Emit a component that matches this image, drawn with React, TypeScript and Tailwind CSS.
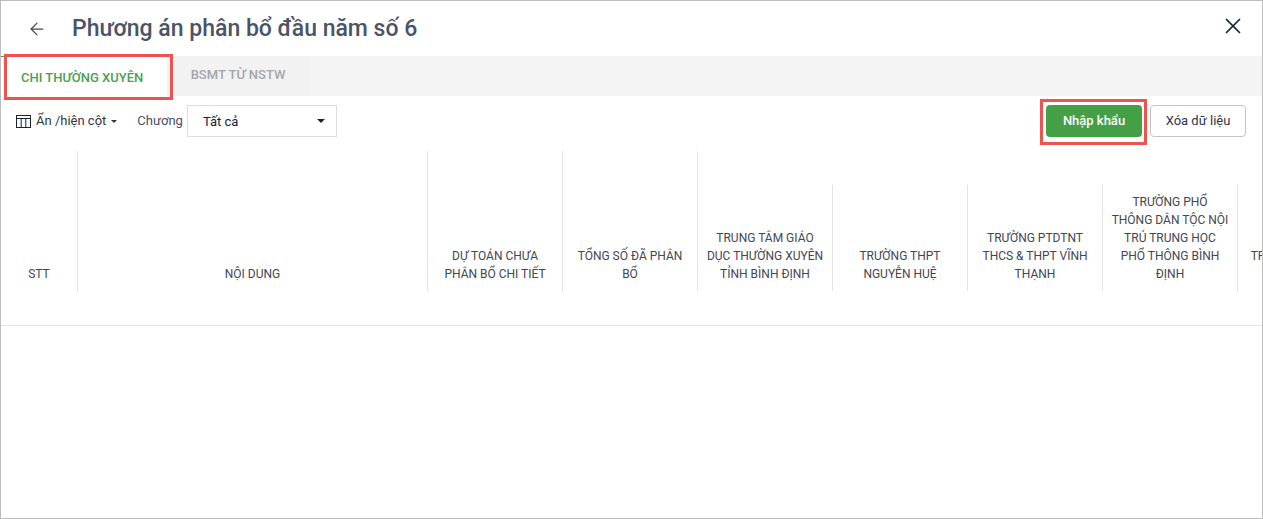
import React from 'react';
import { ArrowLeft, X } from 'lucide-react';

const fixedColumns = [
    { label: 'STT', width: 'w-[77px]' },
    { label: 'NỘI DUNG', width: 'w-[350px]' },
    { label: 'DỰ TOÁN CHƯA PHÂN BỔ CHI TIẾT', width: 'w-[135px]' },
    { label: 'TỔNG SỐ ĐÃ PHÂN BỔ', width: 'w-[135px]' },
];

const schoolColumns = [
    'TRUNG TÂM GIÁO DỤC THƯỜNG XUYÊN TỈNH BÌNH ĐỊNH',
    'TRƯỜNG THPT NGUYỄN HUỆ',
    'TRƯỜNG PTDTNT THCS & THPT VĨNH THẠNH',
    'TRƯỜNG PHỔ THÔNG DÂN TỘC NỘI TRÚ TRUNG HỌC PHỔ THÔNG BÌNH ĐỊNH',
    'TRƯỜNG THPT TAM QUAN',
];

const HeaderCell: React.FC<{ label: string; className: string }> = ({ label, className }) => (
    <div className={`flex shrink-0 items-end justify-center border-r border-[#e2e4e8] px-[8px] pb-[8px] text-center text-[12px] leading-[18px] text-[#3f4654] ${className}`}>
        <span>{label}</span>
    </div>
);

export default function App() {
    return (
        <div className="relative h-[519px] w-[1263px] overflow-hidden border border-[#bdbdbd] bg-white font-['Roboto',sans-serif]">
            {/* Title */}
            <div className="flex h-[55px] items-center pl-[26px] pr-[16px]">
                <ArrowLeft className="h-[20px] w-[20px] text-[#3f4654]" strokeWidth={1.5} />
                <h1 className="ml-[25px] mt-[1px] text-[23px] font-medium text-[#4a5468]">Phương án phân bổ đầu năm số 6</h1>
                <X className="mb-[5px] ml-auto h-[26px] w-[26px] text-[#1a2238]" strokeWidth={1.6} />
            </div>

            {/* Tabs */}
            <div className="flex h-[40px] bg-[#f4f4f4] text-[13px] font-medium">
                <div className="flex w-[166px] items-center border-t border-[#43a047] bg-white pl-[20px] pt-[2px] text-[#4c9f50]">CHI THƯỜNG XUYÊN</div>
                <div className="flex w-[142px] items-center justify-center bg-[#f2f2f2] pb-[2px] text-[#a3a6ad]">BSMT TỪ NSTW</div>
            </div>

            {/* Toolbar */}
            <div className="flex h-[55px] items-start pl-[15px] pr-[16px] pt-[9px] text-[13px]">
                <div className="flex h-[32px] items-center text-[#2e3547]">
                    <svg className="h-[15px] w-[15px]" viewBox="0 0 15 15" fill="none" stroke="#1a2238" strokeWidth="1">
                        <rect x="0.5" y="1.5" width="14" height="12" />
                        <path d="M0.5 4.5H14.5M5.2 4.5V13.5M9.8 4.5V13.5" />
                    </svg>
                    <span className="ml-[5px]">Ẩn /hiện cột</span>
                    <span className="ml-[5px] h-0 w-0 border-x-[3px] border-t-[3px] border-x-transparent border-t-[#2e3547]" />
                </div>
                <div className="ml-[20px] flex h-[32px] items-center text-[#4a4f68]">Chương</div>
                <div className="ml-[4px] flex h-[32px] w-[150px] items-center justify-between border border-[#dcdcdc] pl-[15px] pr-[11px] text-[#1a2238]">
                    <span className="pt-[1px]">Tất cả</span>
                    <span className="h-0 w-0 border-x-[4px] border-t-[4px] border-x-transparent border-t-[#1a2238]" />
                </div>
                <button className="ml-auto h-[32px] w-[96px] rounded-[4px] bg-[#43a047] text-[13px] font-medium text-white">Nhập khẩu</button>
                <button className="ml-[8px] h-[32px] w-[96px] rounded-[4px] border border-[#c4c4c4] bg-white text-[13px] text-[#2e3547]">Xóa dữ liệu</button>
            </div>

            {/* Table header */}
            <div className="flex h-[175px] items-start overflow-hidden border-b border-[#e2e4e8]">
                {fixedColumns.map((col) => (
                    <HeaderCell key={col.label} label={col.label} className={`h-[140px] ${col.width}`} />
                ))}
                <div className="flex shrink-0 flex-col">
                    <div className="h-[34px]" />
                    <div className="flex">
                        {schoolColumns.map((label) => (
                            <HeaderCell key={label} label={label} className="h-[106px] w-[135px]" />
                        ))}
                    </div>
                </div>
            </div>

            {/* Red annotation frames */}
            <div className="absolute left-[3px] top-[53px] h-[46px] w-[169px] border-[3px] border-[#ef5350]" />
            <div className="absolute left-[1039px] top-[98px] h-[46px] w-[107px] border-[3px] border-[#ef5350]" />
        </div>
    );
}
